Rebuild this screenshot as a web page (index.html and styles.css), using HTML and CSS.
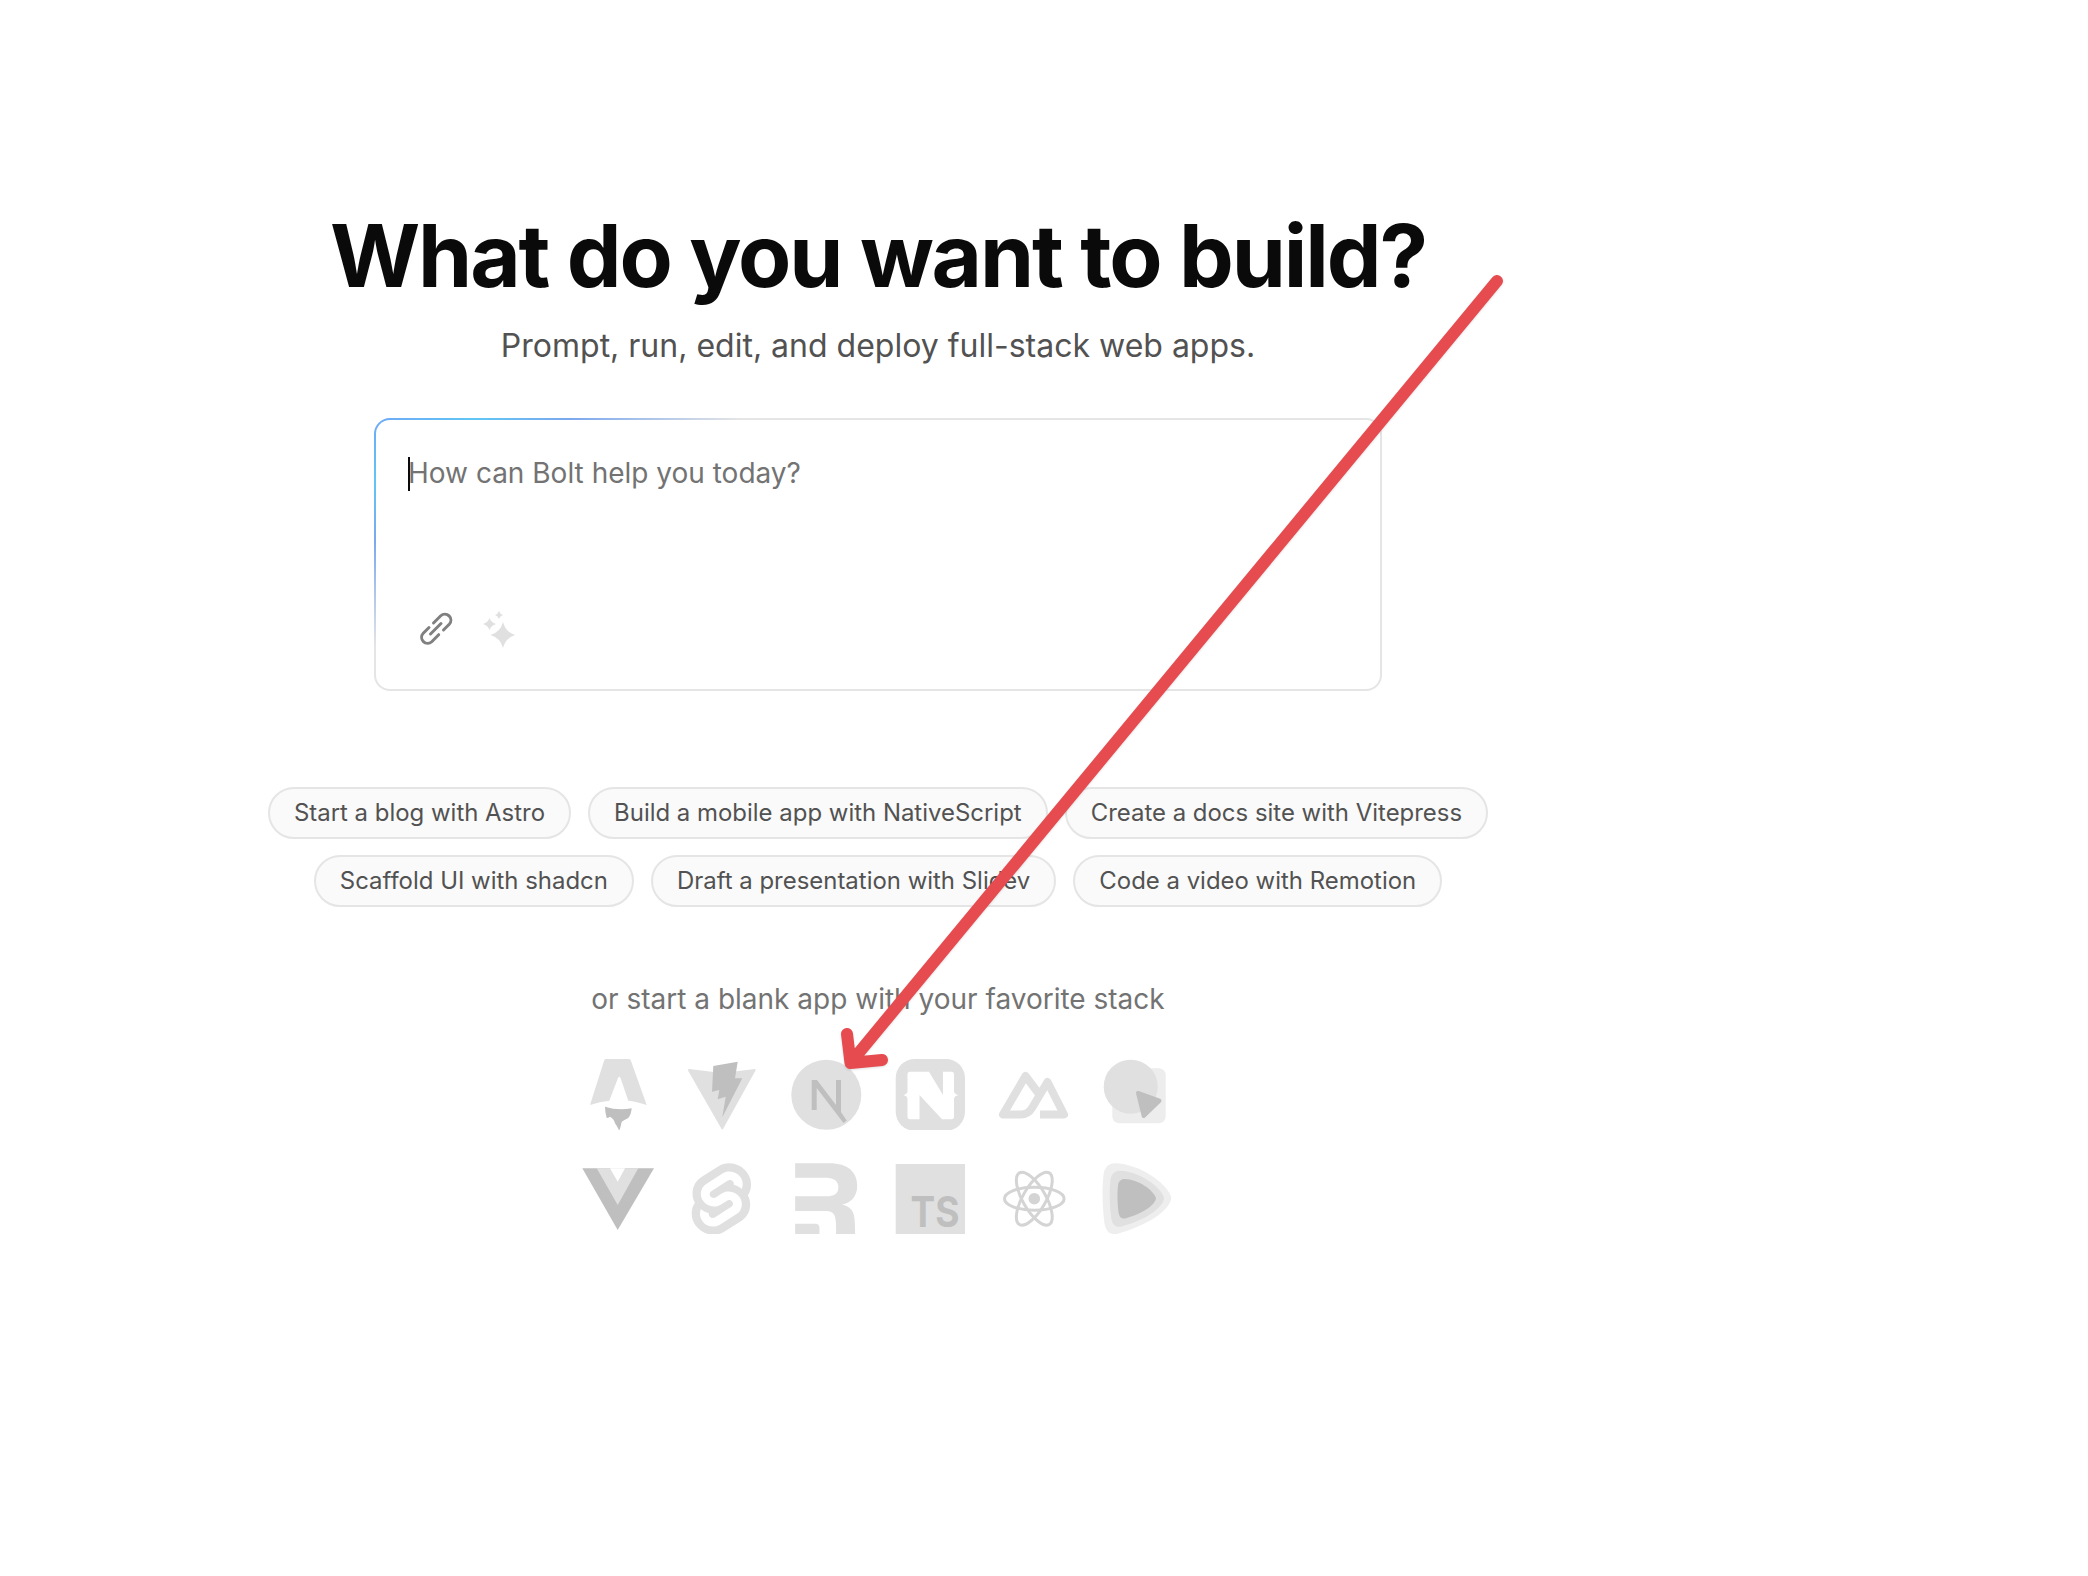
FILE: index.html
```html
<!DOCTYPE html>
<html lang="en">
<head>
<meta charset="utf-8">
<title>Bolt</title>
<link rel="stylesheet" href="styles.css">
</head>
<body>
<main class="page">
  <h1 class="title">What do you want to build?</h1>
  <p class="subtitle">Prompt, run, edit, and deploy full-stack web apps.</p>
  <section class="prompt">
    <div class="prompt-text"><span class="caret"></span><span class="placeholder">How can Bolt help you today?</span></div>
    <div class="tools">
      <svg class="tool-link" width="34" height="34" viewBox="0 0 34 34" fill="none" stroke="#808080" stroke-width="3" stroke-linecap="round"><path d="M13.500 11L20.760 3.760A6 6 0 0 1 29.240 12.240L23.500 18"/><path d="M18.700 22.700L11.740 29.740A6 6 0 0 1 3.260 21.260L9 15.500"/><path d="M10.500 22L21 11.500"/></svg>
      <svg class="tool-spark" width="36" height="38" viewBox="0 0 36 38" fill="#e0e0e0"><path d="M20 11Q22.500 21 32 24Q22.500 27 20 37Q17.500 27 7.500 24Q17.500 21 20 11Z"/><path d="M6.500 7Q8 11.500 13 13Q8 14.500 6.500 19Q5 14.500 0 13Q5 11.500 6.500 7Z"/><path d="M16 0Q17 3 20 4Q17 5 16 8Q15 5 12 4Q15 3 16 0Z"/></svg>
    </div>
  </section>
  <div class="chips">
    <button class="chip">Start a blog with Astro</button>
    <button class="chip">Build a mobile app with NativeScript</button>
    <button class="chip">Create a docs site with Vitepress</button>
    <button class="chip">Scaffold UI with shadcn</button>
    <button class="chip">Draft a presentation with Slidev</button>
    <button class="chip">Code a video with Remotion</button>
  </div>
  <p class="stack-label">or start a blank app with your favorite stack</p>
  <div class="stack">
    <svg class="logo" viewBox="0 0 72 72"><path fill="#e0e0e0" d="M24 1H47Q48.500 1 49 3L64.700 47Q54 43.500 46.300 42.700L38.500 20Q37.300 17.500 36 20L27.300 42.700Q18 43.500 8 47L22 3Q22.500 1 24 1Z"/><path fill="#bfbfbf" d="M23 48.700Q36 53 49.700 50.300Q49 57 46.300 60Q42 62 39.700 63.700Q39 68 37.300 72.700Q35 68 33 65.300Q32 61 28 58.700Q26 60 24.700 60Q23 54 23 48.700Z"/></svg>
    <svg class="logo" viewBox="0 0 72 72"><path fill="#e0e0e0" d="M3 11L36 15L69 11Q70 11 69.500 12.500L37 71Q36.300 72 35.600 71L2 12.500Q1.700 11 3 11Z"/><path fill="#bfbfbf" d="M27.300 8L51.700 3.700L49 20.300H56.300L36.300 59.300L39.700 38.700L31.700 41.300L33.300 32L26 33.700Z"/></svg>
    <svg class="logo" viewBox="0 0 72 72"><circle cx="36.300" cy="36.800" r="35" fill="#e0e0e0"/><path fill="#bfbfbf" d="M21.700 22H27L46 47V22H51V54L56.700 62.500L53.500 65L26.700 30V52H21.700Z"/></svg>
    <svg class="logo" viewBox="0 0 72 72"><rect x="1.700" y="1" width="69.300" height="71.700" rx="19" fill="#e0e0e0"/><path fill="#fff" d="M16 13.700H35L49 37V13.700H57.500Q60 13.700 60 16V33Q60 36 64.500 37Q60 38 60 41V59Q60 61.300 57.500 61.300H48L25.500 37V61.300H16Q13.500 61.300 13.500 59V41Q13.500 38 9.300 37Q13.500 36 13.500 33V16Q13.500 13.700 16 13.700Z"/></svg>
    <svg class="logo" viewBox="0 0 72 72"><path fill="none" stroke="#e0e0e0" stroke-width="8" stroke-linejoin="round" stroke-linecap="butt" d="M41 36L27.500 18L5 56.500H23Q30 56.500 34 50L49.500 24L66 56.500H42"/></svg>
    <svg class="logo" viewBox="0 0 72 72"><rect x="10.300" y="10.300" width="53.400" height="55" rx="7" fill="#ededed"/><circle cx="28.700" cy="28.700" r="27" fill="#e0e0e0"/><path fill="#bfbfbf" stroke="#bfbfbf" stroke-width="4" stroke-linejoin="round" d="M36 35L57.500 42.700L41.700 58Z"/></svg>
    <svg class="logo" viewBox="0 0 72 72"><path fill="#bfbfbf" d="M0.300 6.300H72L35.700 68Z"/><path fill="#e0e0e0" d="M14.700 6.300H56.300L35.700 43Z"/><path fill="#fff" d="M28 6.300H43L35.700 19.700Z"/></svg>
    <svg class="logo" viewBox="0 0 72 72"><g transform="translate(5.700 1.300) scale(.605)"><path fill="#e0e0e0" fill-rule="evenodd" d="M91.800 15.600C80.900-.1 59.200-4.700 43.600 5.200L16.100 22.800C8.600 27.500 3.400 35.200 1.900 43.900c-1.300 7.300-.2 14.800 3.300 21.300-2.400 3.600-4 7.600-4.700 11.800-1.600 8.900.5 18.100 5.700 25.400 11 15.700 32.600 20.300 48.200 10.400l27.500-17.500c7.500-4.700 12.700-12.400 14.200-21.100 1.300-7.300.2-14.800-3.300-21.300 2.400-3.600 4-7.600 4.700-11.800 1.700-9-.4-18.200-5.700-25.500M40.900 103.900c-8.900 2.300-18.200-1.200-23.400-8.700-3.200-4.400-4.400-9.900-3.500-15.300.2-.9.400-1.700.6-2.600l.5-1.600 1.400 1c3.300 2.400 6.900 4.200 10.800 5.400l1 .3-.1 1c-.1 1.400.3 2.900 1.100 4.100 1.600 2.300 4.400 3.400 7.100 2.700.6-.2 1.200-.4 1.700-.7L65.500 72c1.400-.9 2.300-2.200 2.600-3.800.3-1.600-.1-3.300-1-4.600-1.600-2.300-4.400-3.300-7.100-2.600-.6.200-1.200.4-1.700.7l-10.500 6.700c-1.700 1.100-3.600 1.900-5.600 2.400-8.900 2.300-18.200-1.200-23.400-8.700-3.100-4.400-4.400-9.900-3.400-15.300.9-5.200 4.100-9.900 8.600-12.700l27.500-17.500c1.700-1.100 3.600-1.900 5.600-2.500 8.900-2.300 18.200 1.200 23.400 8.700 3.200 4.400 4.400 9.900 3.500 15.300-.2.900-.4 1.700-.7 2.600l-.5 1.600-1.400-1c-3.300-2.400-6.900-4.200-10.800-5.400l-1-.3.100-1c.1-1.400-.3-2.900-1.100-4.100-1.600-2.300-4.400-3.300-7.100-2.600-.6.200-1.200.4-1.700.7L32.400 46.100c-1.400.9-2.300 2.200-2.600 3.800s.1 3.300 1 4.600c1.600 2.300 4.400 3.300 7.100 2.600.6-.2 1.200-.4 1.700-.7l10.500-6.700c1.700-1.100 3.600-1.900 5.600-2.500 8.900-2.300 18.200 1.200 23.400 8.700 3.200 4.400 4.400 9.900 3.500 15.300-.9 5.200-4.100 9.900-8.600 12.700l-27.500 17.500c-1.700 1.100-3.600 1.900-5.600 2.500"/></g></svg>
    <svg class="logo" viewBox="0 0 72 72"><g transform="translate(5 1.300) scale(.151)"><path fill="#e0e0e0" d="M393.946 364.768C398.201 419.418 398.201 445.036 398.201 473H271.756C271.756 466.909 271.865 461.337 271.975 455.687C272.317 438.123 272.674 419.807 269.828 382.819C266.067 328.667 242.748 316.634 199.871 316.634H161.883H1V218.109H205.889C260.049 218.109 287.130 201.633 287.130 158.011C287.130 119.654 260.049 96.410 205.889 96.410H1V0H228.456C351.069 0 412 57.912 412 150.420C412 219.613 369.123 264.739 311.201 272.260C360.096 282.037 388.681 309.865 393.946 364.768Z"/><path fill="#e0e0e0" d="M1 473V399.553H134.697C157.029 399.553 161.878 416.116 161.878 425.994V473H1Z"/></g></svg>
    <svg class="logo logo-ts" viewBox="0 0 72 72"><rect x="1.700" y="2" width="69.300" height="70" fill="#e0e0e0"/><text class="ts" x="16.500" y="65.300" textLength="49" lengthAdjust="spacingAndGlyphs">TS</text></svg>
    <svg class="logo" viewBox="0 0 72 72"><g fill="none" stroke="#d4d4d4" stroke-width="3"><ellipse cx="36.300" cy="36.700" rx="29.800" ry="11.500"/><ellipse cx="36.300" cy="36.700" rx="29.800" ry="11.500" transform="rotate(60 36.300 36.700)"/><ellipse cx="36.300" cy="36.700" rx="29.800" ry="11.500" transform="rotate(120 36.300 36.700)"/></g><circle cx="36.300" cy="36.700" r="5.800" fill="#d4d4d4"/></svg>
    <svg class="logo" viewBox="0 0 72 72"><path fill="#eeeeee" d="M13 1.300C38 2 64.700 21.300 69 34.700C70.700 41.300 58 59.700 14.700 72C6.300 73 3 68 2 58C0 38 0 21.300 2 9.700C4 4 8 1.300 13 1.300Z"/><path fill="#e0e0e0" transform="translate(35 37.200) scale(.79) translate(-35 -37.200)" d="M13 1.300C38 2 64.700 21.300 69 34.700C70.700 41.300 58 59.700 14.700 72C6.300 73 3 68 2 58C0 38 0 21.300 2 9.700C4 4 8 1.300 13 1.300Z"/><path fill="#bfbfbf" transform="translate(34.800 37) scale(.56) translate(-35 -37.200)" d="M13 1.300C38 2 64.700 21.300 69 34.700C70.700 41.300 58 59.700 14.700 72C6.300 73 3 68 2 58C0 38 0 21.300 2 9.700C4 4 8 1.300 13 1.300Z"/></svg>
  </div>
</main>
<svg class="arrow" width="2088" height="1576" viewBox="0 0 2088 1576" fill="none"><path stroke="#e64b4f" stroke-width="12" stroke-linecap="round" stroke-linejoin="round" d="M1497 281L852 1061M847 1034L850.500 1063L882 1060"/></svg>
</body>
</html>
```

FILE: styles.css
```css
* { box-sizing: border-box; }
html, body { margin: 0; padding: 0; background: #fff; }
body { font-family: Inter, "Noto Sans", sans-serif; position: relative; height: 1576px; overflow: hidden; }
.page { width: 1756px; display: flex; flex-direction: column; align-items: center; padding-top: 197px; }
.title { margin: 0; font-size: 87px; line-height: 118px; font-weight: 700; letter-spacing: -2.100px; color: #0a0a0a; white-space: nowrap; }
.subtitle { margin: 9px 0 0; font-size: 32px; line-height: 44px; color: #525252; }
.prompt {
  width: 1008px; height: 273px; margin-top: 50px; padding: 35px 32px 40px;
  display: flex; flex-direction: column; justify-content: space-between;
  border: 2px solid transparent; border-radius: 16px;
  background: linear-gradient(#fff, #fff) padding-box,
    linear-gradient(148deg, #6ea8f7 0, #60c6f5 55px, #7ba8ee 105px, #e5e5e5 195px) border-box;
}
.prompt-text { display: flex; align-items: center; font-size: 28px; line-height: 36px; color: #737373; }
.placeholder { margin-bottom: 2px; }
.caret { width: 2px; height: 34px; background: #0a0a0a; margin-right: -2px; }
.tools { display: flex; align-items: flex-start; gap: 29px; padding-left: 12px; }
.tool-spark { margin-top: -1px; }
.chips { width: 1240px; margin-top: 96px; display: flex; flex-wrap: wrap; justify-content: center; gap: 16px 17px; }
.chip {
  height: 52px; padding: 0 24px 2px; border: 2px solid #e5e5e5; border-radius: 26px; background: #fafafa;
  font: 400 23.950px Inter, sans-serif; color: #525252;
}
.stack-label { margin: 72px 0 0; font-size: 28px; line-height: 40px; color: #737373; }
.stack { margin-top: 39px; display: grid; grid-template-columns: repeat(6, 72px); gap: 32px; }
.logo { display: block; width: 72px; height: 72px; }
.logo-ts { overflow: visible; }
.ts { font-family: Inter, sans-serif; font-weight: 700; font-size: 42px; fill: #bfbfbf; }
.arrow { position: absolute; left: 0; top: 0; pointer-events: none; filter: drop-shadow(0 1px 1px rgba(0,0,0,.12)); }
```
